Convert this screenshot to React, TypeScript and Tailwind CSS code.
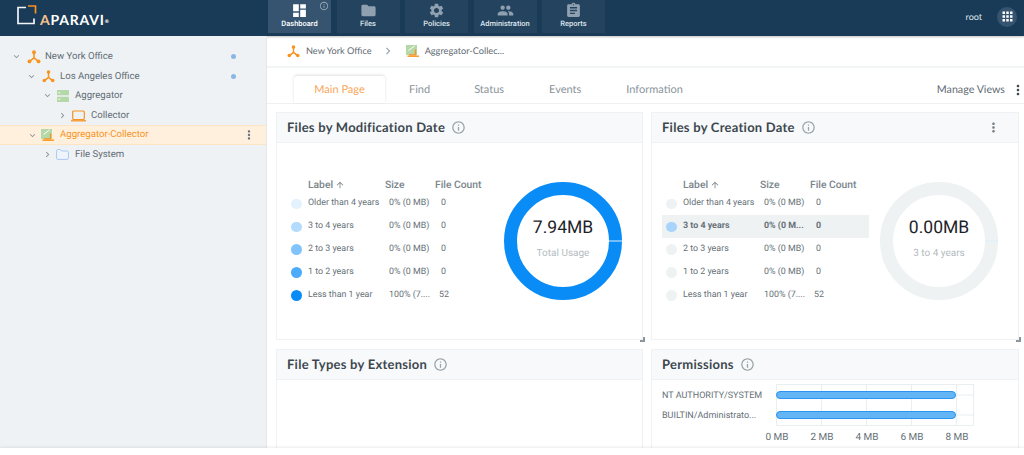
import React from "react";
import { MdDashboard, MdFolder, MdSettings, MdPeople, MdAssignment, MdExpandMore, MdChevronRight, MdMoreVert, MdInfoOutline, MdApps, MdArrowUpward } from "react-icons/md";

const Net = ({ s = 14 }: { s?: number }) => (
  <svg width={s} height={s} viewBox="0 0 16 16" fill="none" className="shrink-0">
    <path d="M8 3v6M8 9l-5 4M8 9l5 4" stroke="#f7931e" strokeWidth="1.8" />
    <circle cx="8" cy="2.6" r="2.2" fill="#f7931e" />
    <circle cx="2.8" cy="13" r="2.2" fill="#f7931e" />
    <circle cx="13.2" cy="13" r="2.2" fill="#f7931e" />
  </svg>
);
const Server = () => (
  <svg width="12" height="12" viewBox="0 0 12 12" className="shrink-0">
    <rect x="0" y="0" width="12" height="5.3" rx="0.5" fill="#b5d8a8" />
    <rect x="0" y="6.7" width="12" height="5.3" rx="0.5" fill="#b5d8a8" />
    <circle cx="2.2" cy="2.7" r="0.8" fill="#fff" />
    <circle cx="2.2" cy="9.3" r="0.8" fill="#fff" />
  </svg>
);
const Laptop = () => (
  <svg width="15" height="12" viewBox="0 0 15 12" fill="none" className="shrink-0">
    <rect x="1.7" y="1" width="11.6" height="8.5" rx="1" stroke="#f7931e" strokeWidth="1.2" />
    <path d="M0 10.8h15" stroke="#f7931e" strokeWidth="1.3" />
  </svg>
);
const Combo = () => (
  <svg width="13" height="12" viewBox="0 0 13 12" fill="none" className="shrink-0">
    <rect x="0" y="0" width="11" height="10" fill="#b5d8a8" />
    <path d="M2.5 5.5L8.5 1" stroke="#fff" strokeWidth="1" />
    <path d="M3 9.8h6.5V4.5" stroke="#f7931e" strokeWidth="1.3" />
    <path d="M1.5 11.2h11.5" stroke="#f7931e" strokeWidth="1.4" />
  </svg>
);
const Folder = () => (
  <svg width="13" height="11" viewBox="0 0 13 11" fill="none" className="shrink-0">
    <path d="M0.6 1.6c0-.5.4-1 1-1h3l1.2 1.4h5.6c.5 0 1 .4 1 1v6.4c0 .5-.5 1-1 1H1.6c-.6 0-1-.5-1-1z" fill="#eef4fc" stroke="#a9c8f0" strokeWidth="1" />
  </svg>
);
const Logo = () => (
  <svg width="20" height="20" viewBox="0 0 20 20" fill="none" className="shrink-0">
    <path d="M9 2.5H1v16h16v-5" stroke="#f2f5f7" strokeWidth="1.7" />
    <path d="M11 1h7.5v7.5" stroke="#f7931e" strokeWidth="1.7" />
  </svg>
);

const Tree = ({ indent, gap, open, icon, label, dot, active }: { indent: string; gap: string; open: boolean; icon: React.ReactNode; label: string; dot?: boolean; active?: boolean }) => (
  <div className={`flex h-[19.6px] items-center ${indent} ${active ? "border-y border-[#fde4c4] bg-[#fff0dd] text-[#f7931e]" : "text-[#5f6b73]"}`}>
    <span className="flex w-[17px] shrink-0 justify-center text-[#8a949b]">
      {open ? <MdExpandMore size={11} /> : <MdChevronRight size={11} />}
    </span>
    {icon}
    <span className={`${gap} flex-1 text-[9.6px] leading-none`}>{label}</span>
    {dot && <span className="mr-[30px] h-[5px] w-[5px] rounded-full bg-[#8ab8e6]" />}
    {active && <MdMoreVert size={14} className="mr-[10px] text-[#66727a]" />}
  </div>
);

const Nav = ({ icon, label, info }: { icon: React.ReactNode; label: string; info?: boolean }) => (
  <div className={`relative flex h-[33px] w-[63px] flex-col items-center text-[7.5px] font-medium ${info ? "bg-[#365470] text-white" : "bg-[#24435f] text-[#dfe6ec]"}`}>
    <span className={`mt-[2px] flex h-[16px] items-center ${info ? "text-white" : "text-[#8fa1b1]"}`}>{icon}</span>
    <span className="mt-[1px] leading-[10px]">{label}</span>
    {info && <MdInfoOutline size={10} className="absolute right-[2px] top-[1px] text-[#95a6b5]" />}
  </div>
);

const rows = ["Older than 4 years", "3 to 4 years", "2 to 3 years", "1 to 2 years", "Less than 1 year"];
const sizes = ["0% (0 MB)", "0% (0 MB)", "0% (0 MB)", "0% (0 MB)", "100% (7...."];
const counts = ["0", "0", "0", "0", "52"];
const blues = ["bg-[#e3f2fd]", "bg-[#b3dbfd]", "bg-[#80c3fd]", "bg-[#4dabfb]", "bg-[#0a8cf7]"];

const Head = ({ title, more }: { title: string; more?: boolean }) => (
  <div className="flex h-[30px] items-center border-b border-[#eef2f4] bg-[#f7f9fa] pl-[10px] pr-[17px] pt-[1px]">
    <span className="font-[Lato] text-[13px] font-bold tracking-[0.25px] text-[#3c474f]">{title}</span>
    <MdInfoOutline size={15} className="ml-[6px] text-[#9aa3a9]" />
    {more && <MdMoreVert size={15} className="ml-auto text-[#6e7980]" />}
  </div>
);

const Donut = ({ color, value, sub }: { color: string; value: string; sub: string }) => (
  <div className="relative ml-auto mr-[20px] mt-[39px] h-[118px] w-[118px] shrink-0">
    <svg width="118" height="118" viewBox="0 0 118 118">
      <circle cx="59" cy="59" r="52.5" fill="none" stroke={color} strokeWidth="13" />
      <path d="M105 59h13" stroke="#ddeefc" strokeWidth="1" />
    </svg>
    <div className="absolute inset-0 flex flex-col items-center pt-[34px]">
      <span className="text-[17.5px] leading-[24px] text-[#1c2328]">{value}</span>
      <span className="mt-[7px] text-[10px] leading-[14px] text-[#b3bbc1]">{sub}</span>
    </div>
  </div>
);

const Legend = ({ dots, hi }: { dots: string[]; hi?: number }) => (
  <div className="mt-[34px] w-[218px] shrink-0 pl-[10px]">
    <div className="flex h-[16px] items-center whitespace-nowrap text-[10.3px] font-medium text-[#7a858c]">
      <span className="ml-[21px] flex w-[77px] items-center">Label<MdArrowUpward size={10} className="ml-[2px]" /></span>
      <span className="w-[50px]">Size</span>
      <span>File Count</span>
    </div>
    <div>
      {rows.map((r, i) => (
        <div key={r} className={`flex h-[22.9px] w-[207px] items-center text-[8.9px] text-[#667178] ${hi === i ? "bg-[#eef2f3] font-bold text-[#3c474f]" : ""}`}>
          <span className={`ml-[4px] h-[10.5px] w-[10.5px] shrink-0 rounded-full ${dots[i]}`} />
          <span className="ml-[6.5px] w-[81px] shrink-0 whitespace-nowrap">{r}</span>
          <span className="w-[50px] shrink-0 whitespace-nowrap">{hi === i ? "0% (0 M..." : sizes[i]}</span>
          <span className={counts[i] === "52" ? "" : "ml-[2px]"}>{counts[i]}</span>
        </div>
      ))}
    </div>
  </div>
);

const Resize = () => (
  <span className="absolute bottom-[-3px] right-[-3px] h-[5px] w-[5px] border-b-2 border-r-2 border-[#8b959b]" />
);

export default function App() {
  return (
    <div className="relative flex h-[455px] w-[1024px] flex-col overflow-hidden bg-white font-[Roboto] [text-rendering:geometricPrecision]">
      <header className="flex h-[36px] shrink-0 items-start bg-[#1a3b57] shadow-[0_1px_2px_rgba(0,0,0,0.25)]">
        <div className="flex h-[30px] w-[268px] shrink-0 items-center pl-[17px]">
          <Logo />
          <span className="ml-[3px] mt-[10px] font-[Lato] text-[14px] font-bold leading-none tracking-[0.8px] text-white">
            <span className="text-[#f7c28a]">A</span>PARAVI<sup className="text-[5px]">®</sup>
          </span>
        </div>
        <nav className="flex gap-[5.5px]">
          <Nav info label="Dashboard" icon={<MdDashboard size={17} />} />
          <Nav label="Files" icon={<MdFolder size={17} />} />
          <Nav label="Policies" icon={<MdSettings size={17} />} />
          <Nav label="Administration" icon={<MdPeople size={17} />} />
          <Nav label="Reports" icon={<MdAssignment size={17} />} />
        </nav>
        <div className="ml-auto flex h-[33px] items-center pr-[7px]">
          <span className="font-[Lato] text-[9px] text-[#dfe6ec]">root</span>
          <span className="ml-[15px] flex h-[20px] w-[20px] items-center justify-center rounded-full bg-[#365470] text-white">
            <MdApps size={15} />
          </span>
        </div>
      </header>

      <div className="flex min-h-0 flex-1">
        <aside className="w-[267px] shrink-0 border-r border-[#e3e8eb] bg-[#eef2f5] pt-[11px]">
          <Tree indent="pl-[8px]" gap="ml-[4px]" open icon={<span className="ml-[2px] flex"><Net /></span>} label="New York Office" dot />
          <Tree indent="pl-[23px]" gap="ml-[5px]" open icon={<span className="ml-[2px] flex"><Net s={13} /></span>} label="Los Angeles Office" dot />
          <Tree indent="pl-[39px]" gap="ml-[6px]" open icon={<span className="ml-[1px] flex"><Server /></span>} label="Aggregator" />
          <Tree indent="pl-[54px]" gap="ml-[5px]" open={false} icon={<Laptop />} label="Collector" />
          <Tree indent="pl-[24px]" gap="ml-[6px]" open active icon={<Combo />} label="Aggregator-Collector" />
          <Tree indent="pl-[39px]" gap="ml-[6px]" open={false} icon={<Folder />} label="File System" />
        </aside>

        <main className="flex min-w-0 flex-1 flex-col">
          <div className="flex h-[32px] shrink-0 items-center border-b-2 border-[#f2f5f6] pl-[20px] font-[Lato] text-[9.2px] text-[#5f6b73]">
            <Net s={13} />
            <span className="ml-[6px]">New York Office</span>
            <MdChevronRight size={14} className="ml-[9px] text-[#9aa3a9]" />
            <span className="ml-[11px]"><Combo /></span>
            <span className="ml-[6px]">Aggregator-Collec...</span>
          </div>

          <div className="flex h-[36px] shrink-0 items-end border-b border-[#eef1f3] pl-[27px] font-[Lato] text-[11px] text-[#8a949b]">
            <span className="flex h-[27px] w-[91px] items-center justify-center rounded-t-[3px] bg-white pt-[1px] text-[#f9a65a] shadow-[0_-1px_3px_rgba(0,0,0,0.13)]">Main Page</span>
            <span className="ml-[24px] flex h-[28px] items-center pt-[2px]">Find</span>
            <span className="ml-[44px] flex h-[28px] items-center pt-[2px]">Status</span>
            <span className="ml-[45px] flex h-[28px] items-center pt-[2px]">Events</span>
            <span className="ml-[45px] flex h-[28px] items-center pt-[2px]">Information</span>
            <span className="ml-auto flex h-[28px] items-center pt-[2px] text-[10.7px] text-[#5f6b73]">Manage Views<MdMoreVert size={16} className="ml-[5px] mr-[-2px] text-[#3c474f]" /></span>
          </div>

          <div className="grid grid-cols-[367px_368px] gap-x-[8px] gap-y-[9px] pl-[9px] pt-[7.5px]">
            <section className="relative h-[228px] border border-[#eef2f4]">
              <Head title="Files by Modification Date" />
              <div className="flex"><Legend dots={blues} /><Donut color="#0a8cf7" value="7.94MB" sub="Total Usage" /></div>
              <Resize />
            </section>
            <section className="relative h-[228px] border border-[#eef2f4]">
              <Head title="Files by Creation Date" more />
              <div className="flex"><Legend hi={1} dots={["bg-[#eef2f3]", "bg-[#a8d4fb]", "bg-[#eef2f3]", "bg-[#eef2f3]", "bg-[#eef2f3]"]} /><Donut color="#eef2f3" value="0.00MB" sub="3 to 4 years" /></div>
              <Resize />
            </section>
            <section className="h-[120px] border border-[#eef2f4]">
              <Head title="File Types by Extension" />
            </section>
            <section className="h-[120px] border border-[#eef2f4]">
              <Head title="Permissions" />
              <svg width="366" height="68" viewBox="0 0 366 68" className="block">
                <g stroke="#e9eef1" strokeWidth="1" fill="none">
                  <path d="M124.5 4v41M169.5 4v41M214.5 4v41M259.5 4v41M304.5 4v41M321.5 4v41M124.5 4.5h197M124.5 45.5h197M124 15h197M124 35h197" />
                </g>
                <rect x="124.5" y="11.5" width="179" height="7" rx="3.5" fill="#64b5f6" stroke="#2a94ef" />
                <rect x="124.5" y="31.5" width="179" height="7" rx="3.5" fill="#64b5f6" stroke="#2a94ef" />
                <g fontFamily="Roboto" fontSize="9" fill="#667178">
                  <text x="10" y="18">NT AUTHORITY/SYSTEM</text>
                  <text x="10" y="38">BUILTIN/Administrato...</text>
                </g>
                <g fontFamily="Roboto" fontSize="10" fill="#667178" textAnchor="middle">
                  <text x="125" y="60">0 MB</text>
                  <text x="170" y="60">2 MB</text>
                  <text x="215" y="60">4 MB</text>
                  <text x="260" y="60">6 MB</text>
                  <text x="305" y="60">8 MB</text>
                </g>
              </svg>
            </section>
          </div>
        </main>
      </div>
      <div className="absolute bottom-0 left-0 h-[7px] w-[1024px] bg-white shadow-[0_-1px_3px_rgba(0,0,0,0.08)]" />
    </div>
  );
}
